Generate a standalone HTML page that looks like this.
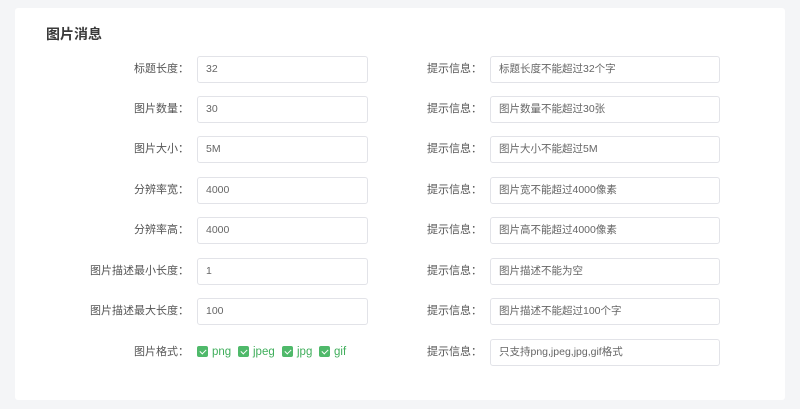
<!DOCTYPE html><html><head><meta charset="utf-8"><style>
body{margin:0;background:#f4f5f7;width:800px;height:409px;overflow:hidden;font-family:"Liberation Sans","Noto Sans CJK SC",sans-serif;}
.card{position:absolute;left:15px;top:8px;width:770px;height:392px;background:#fff;border-radius:3px;}
.t{position:absolute;left:31px;top:16px;font-size:14px;font-weight:bold;color:#3a3a3a;}
.row{position:absolute;left:0;height:27px;width:770px;font-size:11px;color:#555;}
.l{position:absolute;right:596px;top:0;line-height:27px;white-space:nowrap;}
.l2{position:absolute;left:412px;top:0;line-height:27px;}
.in{position:absolute;top:0;height:25px;border:1px solid #e2e3e8;border-radius:3px;line-height:25px;padding-left:8px;box-sizing:content-box;color:#666;font-size:10.5px;}
.a{left:182px;width:161px}.b{left:475px;width:220px}
.cb{position:absolute;top:7px;height:13px;line-height:13px;color:#3fae5b;font-size:11.5px;}
.cb i{display:inline-block;width:11px;height:11px;background:#4fb96a;border-radius:2px;vertical-align:-2px;margin-right:4px;position:relative}
.cb i:after{content:"";position:absolute;left:3.5px;top:1.5px;width:3px;height:5px;border:solid #fff;border-width:0 1.5px 1.5px 0;transform:rotate(45deg)}
</style></head><body><div class="card"><div class="t">图片消息</div>
<div class="row" style="top:48px"><span class="l">标题长度：</span><div class="in a">32</div><span class="l2">提示信息：</span><div class="in b">标题长度不能超过32个字</div></div>
<div class="row" style="top:88px"><span class="l">图片数量：</span><div class="in a">30</div><span class="l2">提示信息：</span><div class="in b">图片数量不能超过30张</div></div>
<div class="row" style="top:128px"><span class="l">图片大小：</span><div class="in a">5M</div><span class="l2">提示信息：</span><div class="in b">图片大小不能超过5M</div></div>
<div class="row" style="top:169px"><span class="l">分辨率宽：</span><div class="in a">4000</div><span class="l2">提示信息：</span><div class="in b">图片宽不能超过4000像素</div></div>
<div class="row" style="top:209px"><span class="l">分辨率高：</span><div class="in a">4000</div><span class="l2">提示信息：</span><div class="in b">图片高不能超过4000像素</div></div>
<div class="row" style="top:250px"><span class="l">图片描述最小长度：</span><div class="in a">1</div><span class="l2">提示信息：</span><div class="in b">图片描述不能为空</div></div>
<div class="row" style="top:290px"><span class="l">图片描述最大长度：</span><div class="in a">100</div><span class="l2">提示信息：</span><div class="in b">图片描述不能超过100个字</div></div>
<div class="row" style="top:331px"><span class="l">图片格式：</span>
<span class="cb" style="left:182px"><i></i>png</span><span class="cb" style="left:223px"><i></i>jpeg</span><span class="cb" style="left:267px"><i></i>jpg</span><span class="cb" style="left:304px"><i></i>gif</span>
<span class="l2">提示信息：</span><div class="in b">只支持png,jpeg,jpg,gif格式</div></div>
</div></body></html>
